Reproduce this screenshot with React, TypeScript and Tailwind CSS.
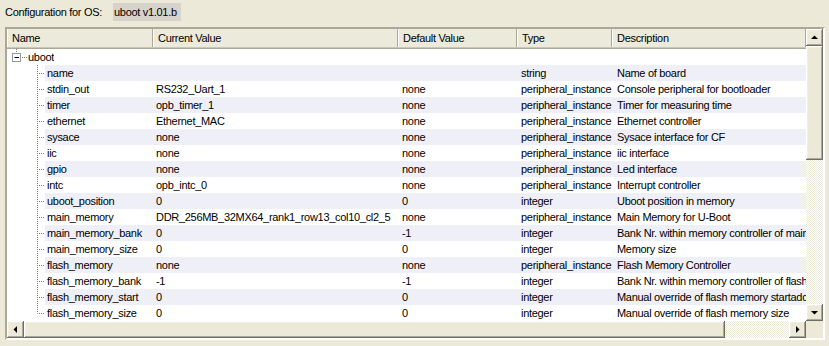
import React from "react";

type Row = [string, string, string, string, string];
const PI = "peripheral_instance";
const rows: Row[] = [
  ["name", "", "", "string", "Name of board"],
  ["stdin_out", "RS232_Uart_1", "none", PI, "Console peripheral for bootloader"],
  ["timer", "opb_timer_1", "none", PI, "Timer for measuring time"],
  ["ethernet", "Ethernet_MAC", "none", PI, "Ethernet controller"],
  ["sysace", "none", "none", PI, "Sysace interface for CF"],
  ["iic", "none", "none", PI, "iic interface"],
  ["gpio", "none", "none", PI, "Led interface"],
  ["intc", "opb_intc_0", "none", PI, "Interrupt controller"],
  ["uboot_position", "0", "0", "integer", "Uboot position in memory"],
  ["main_memory", "DDR_256MB_32MX64_rank1_row13_col10_cl2_5", "none", PI, "Main Memory for U-Boot"],
  ["main_memory_bank", "0", "-1", "integer", "Bank Nr. within memory controller of main memory"],
  ["main_memory_size", "0", "0", "integer", "Memory size"],
  ["flash_memory", "none", "none", PI, "Flash Memory Controller"],
  ["flash_memory_bank", "-1", "-1", "integer", "Bank Nr. within memory controller of flash memory"],
  ["flash_memory_start", "0", "0", "integer", "Manual override of flash memory startaddress"],
  ["flash_memory_size", "0", "0", "integer", "Manual override of flash memory size"],
];

const btn =
  "bg-[#ece9d8] shadow-[inset_-1px_-1px_#716f64,inset_1px_1px_#ffffff,inset_-2px_-2px_#aca899,inset_2px_2px_#f1efe2]";
const track =
  "bg-[repeating-conic-gradient(#ffffff_0%_25%,#ece9d8_0%_50%)] bg-[length:2px_2px]";

function Arrow({ dir }: { dir: "up" | "down" | "left" | "right" }) {
  const pts =
    dir === "up"
      ? "1,5 8,5 4.5,1.5"
      : dir === "down"
      ? "1,2 8,2 4.5,5.5"
      : dir === "left"
      ? "5,1 5,8 1.5,4.5"
      : "2,1 2,8 5.5,4.5";
  const w = dir === "up" || dir === "down" ? 9 : 7;
  const h = dir === "up" || dir === "down" ? 7 : 9;
  return (
    <svg width={w} height={h} viewBox={`0 0 ${w} ${h}`}>
      <polygon points={pts} fill="#000" />
    </svg>
  );
}

function TreeChild({ last }: { last: boolean }) {
  return (
    <svg width="38" height="16" className="shrink-0 bg-white">
      <line x1="30.5" y1="0" x2="30.5" y2={last ? 8.5 : 16} stroke="#7a7a7a" strokeDasharray="1 1" />
      <line x1="32" y1="8.5" x2="38" y2="8.5" stroke="#7a7a7a" strokeDasharray="1 1" />
    </svg>
  );
}

const cell = "h-[16px] leading-[16px] overflow-hidden whitespace-nowrap shrink-0";

export default function App() {
  return (
    <div className="w-[829px] h-[346px] bg-[#ece9d8] font-['Liberation_Sans',Arial,sans-serif] text-[11px] tracking-[-0.3px] text-black flex flex-col overflow-hidden">
      <div className="h-[27px] pl-[5px] pt-[3px] flex items-start">
        <div className="w-[108px] h-[18px] leading-[18px]">Configuration for OS:</div>
        <div className="h-[18px] leading-[18px] bg-[#d6d3cc] px-[1px] w-[68px]">uboot v1.01.b</div>
      </div>
      <div className="ml-[5px] w-[820px] h-[313px] border-2 border-t-[#aca899] border-l-[#aca899] border-r-[#ffffff] border-b-[#ffffff] shadow-[inset_1px_1px_#716f64] flex flex-col bg-white">
        <div className="flex h-[292px]">
          <div className="w-[799px] flex flex-col">
            <div className="flex h-[20px] bg-[#ebeadb] shadow-[inset_0_-1px_#aca899,inset_0_-2px_#cbc7b8]">
              {[
                ["Name", "w-[146px]"],
                ["Current Value", "w-[245px]"],
                ["Default Value", "w-[119px]"],
                ["Type", "w-[95px]"],
                ["Description", "w-[194px]"],
              ].map(([t, w]) => (
                <div
                  key={t}
                  className={`${w} h-[18px] leading-[19px] pl-[5px] shrink-0 overflow-hidden whitespace-nowrap shadow-[inset_-1px_0_#aca899,inset_1px_0_#ffffff]`}
                >
                  {t}
                </div>
              ))}
            </div>
            <div className="flex h-[16px] bg-white">
              <svg width="21" height="16" className="shrink-0">
                <line x1="9.5" y1="0" x2="9.5" y2="4" stroke="#7a7a7a" strokeDasharray="1 1" />
                <rect x="5.5" y="4.5" width="8" height="8" fill="#fff" stroke="#919b9c" />
                <line x1="7.5" y1="8.5" x2="12" y2="8.5" stroke="#000" />
                <line x1="15" y1="8.5" x2="21" y2="8.5" stroke="#7a7a7a" strokeDasharray="1 1" />
              </svg>
              <div className={`${cell} pl-[0px]`}>uboot</div>
            </div>
            {rows.map((r, i) => (
              <div key={r[0]} className="flex h-[16px]">
                <TreeChild last={i === rows.length - 1} />
                <div className={`flex flex-1 ${i % 2 === 0 ? "bg-[#eeeff7]" : "bg-white"}`}>
                  <div className={`${cell} w-[108px] pl-[2px]`}>{r[0]}</div>
                  <div className={`${cell} w-[245px] pl-[3px]`}>{r[1]}</div>
                  <div className={`${cell} w-[119px] pl-[4px]`}>{r[2]}</div>
                  <div className={`${cell} w-[95px] pl-[4px]`}>{r[3]}</div>
                  <div className={`${cell} w-[194px] pl-[5px]`}>{r[4]}</div>
                </div>
              </div>
            ))}
          </div>
          <div className="w-[17px] flex flex-col bg-[#ece9d8]">
            <div className={`${btn} h-[17px] flex items-center justify-center`}>
              <Arrow dir="up" />
            </div>
            <div className={`${btn} h-[114px]`} />
            <div className={`flex-1 ${track}`} />
            <div className={`${btn} h-[17px] flex items-center justify-center`}>
              <Arrow dir="down" />
            </div>
          </div>
        </div>
        <div className="flex h-[17px]">
          <div className="w-[799px] flex">
            <div className={`${btn} w-[17px] flex items-center justify-center`}>
              <Arrow dir="left" />
            </div>
            <div className={`${btn} w-[701px]`} />
            <div className={`flex-1 ${track}`} />
            <div className={`${btn} w-[17px] flex items-center justify-center`}>
              <Arrow dir="right" />
            </div>
          </div>
          <div className="w-[17px] bg-[#ece9d8]" />
        </div>
      </div>
    </div>
  );
}
